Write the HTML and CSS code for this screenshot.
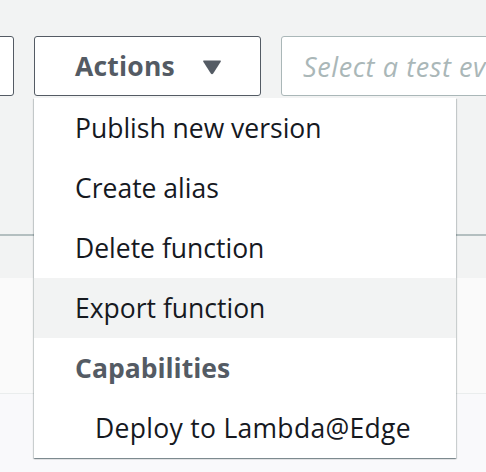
FILE: index.html
```html
<!DOCTYPE html>
<html lang="en">
<head>
    <meta charset="UTF-8">
    <meta name="viewport" content="width=device-width, initial-scale=1.0">
    <title>Lambda Actions</title>
    <link rel="stylesheet" href="styles.css">
</head>
<body>
    <div class="page">
        <div class="top-area">
            <div class="toolbar">
                <button class="btn btn-prev"></button>
                <button class="btn btn-actions">
                    <span class="btn-label">Actions</span>
                    <svg class="caret" width="20" height="16" viewBox="0 0 20 16">
                        <path d="M2 1.5 H18 Q19.5 1.5 18.7 2.8 L11.2 14.6 Q10 16 8.8 14.6 L1.3 2.8 Q0.5 1.5 2 1.5 Z" fill="#545b64"/>
                    </svg>
                </button>
                <div class="test-select">Select a test ev</div>
            </div>
        </div>
        <div class="band"></div>
        <div class="panel"></div>
        <div class="lower"></div>

        <ul class="dropdown">
            <li class="item">Publish new version</li>
            <li class="item">Create alias</li>
            <li class="item">Delete function</li>
            <li class="item item-hover">Export function</li>
            <li class="item group-title">Capabilities</li>
            <li class="item item-sub">Deploy to Lambda@Edge</li>
        </ul>
    </div>
</body>
</html>
```

FILE: styles.css
```css
* {
    margin: 0;
    padding: 0;
    box-sizing: border-box;
    font-family: 'Open Sans', 'Noto Sans', sans-serif;
}

body {
    background: #f9f9fb;
    overflow: hidden;
}

.page {
    position: relative;
    width: 486px;
    height: 472px;
    display: flex;
    flex-direction: column;
}

.top-area {
    height: 236px;
    background: #f2f3f3;
    border-bottom: 2px solid #b4bfc0;
    padding-top: 36px;
}

.toolbar {
    display: flex;
    gap: 20px;
    margin-left: -47px;
}

.btn {
    height: 60px;
    background: #fff;
    border: 1.5px solid #545b64;
    border-radius: 3px;
    display: flex;
    align-items: center;
    justify-content: center;
    flex-shrink: 0;
}

.btn-prev {
    width: 61px;
}

.btn-actions {
    width: 227px;
    gap: 27px;
    padding-left: 2px;
}

.btn-label {
    font-size: 26.5px;
    font-weight: 700;
    color: #545b64;
    letter-spacing: 0.2px;
}

.caret {
    margin-top: 2px;
}

.test-select {
    flex: 1;
    height: 60px;
    min-width: 220px;
    background: #fff;
    border: 1.5px solid #aab7b8;
    border-radius: 3px;
    padding-left: 21px;
    display: flex;
    align-items: center;
    font-size: 27px;
    font-style: italic;
    color: #aab7b8;
    letter-spacing: 0.6px;
    white-space: nowrap;
    overflow: hidden;
}

.band {
    height: 42px;
    background: #f2f3f3;
}

.panel {
    height: 116px;
    background: #fafafa;
    border-bottom: 1px solid #eaeded;
}

.lower {
    flex: 1;
    background: #f9f9fb;
}

/* Actions menu */
.dropdown {
    position: absolute;
    left: 34px;
    top: 98px;
    width: 422px;
    list-style: none;
    background: #fff;
    box-shadow: 0 1px 1px 0 rgba(0, 28, 36, 0.3),
                1px 1px 1px 0 rgba(0, 28, 36, 0.15),
                -1px 1px 1px 0 rgba(0, 28, 36, 0.15);
}

.item {
    height: 60px;
    display: flex;
    align-items: center;
    padding-left: 41px;
    font-size: 26.5px;
    color: #16191f;
}

.item-hover {
    background: #f2f3f3;
}

.group-title {
    font-weight: 700;
    color: #545b64;
}

.item-sub {
    padding-left: 61px;
    letter-spacing: 0.3px;
}
```
